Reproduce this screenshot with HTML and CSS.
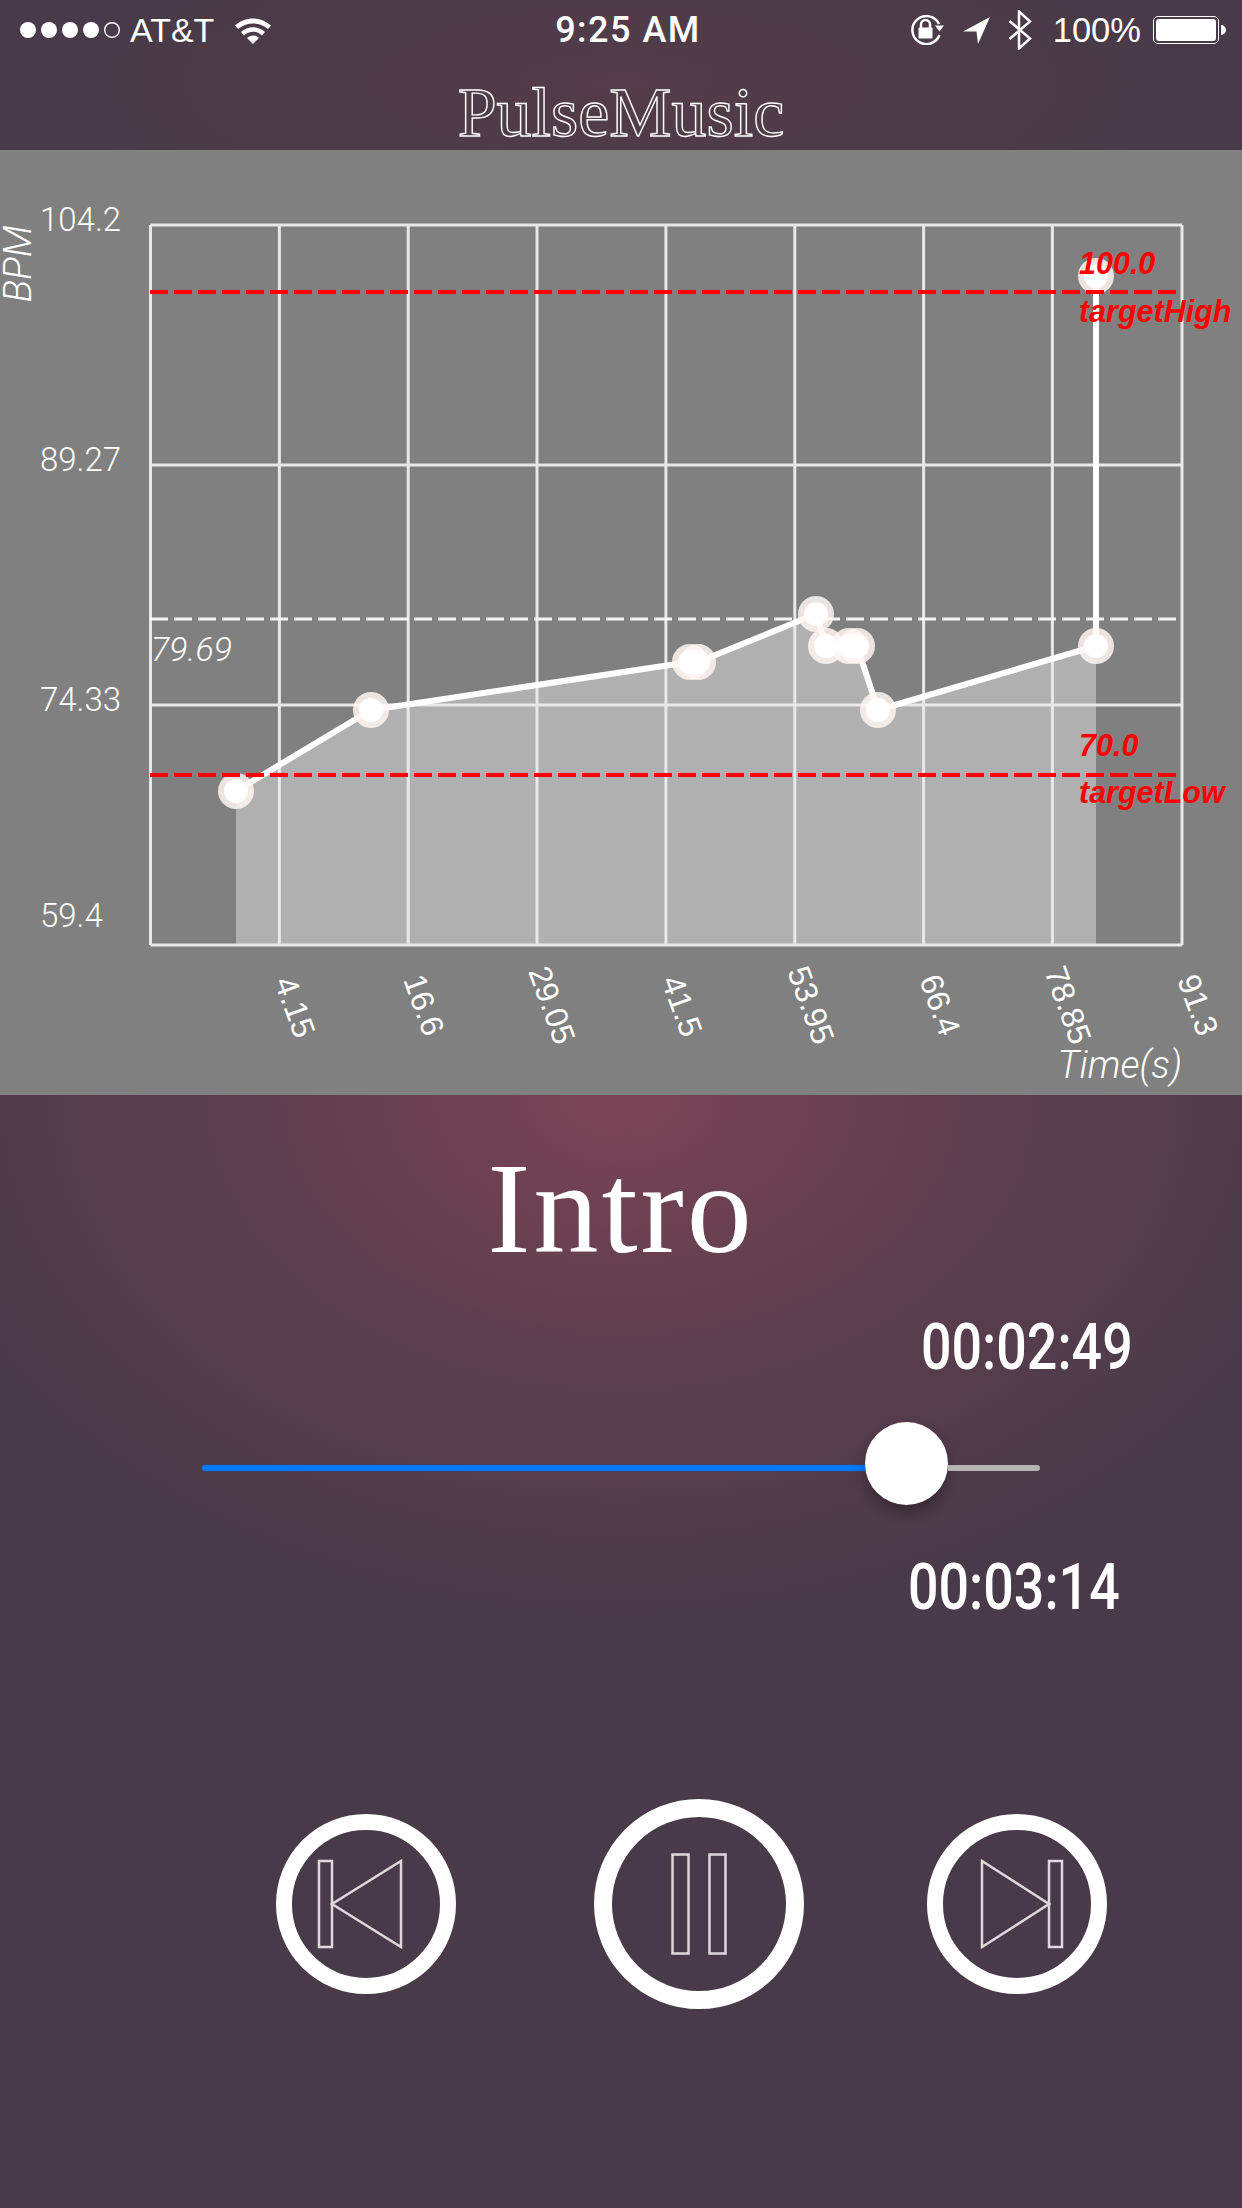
FILE: index.html
```html
<!DOCTYPE html>
<html lang="en">
<head>
    <meta charset="UTF-8">
    <meta name="viewport" content="width=device-width, initial-scale=1.0">
    <title>PulseMusic</title>
    <link rel="stylesheet" href="styles.css">
</head>
<body>
    <header class="top">
        <div class="status">
            <div class="status-left">
                <svg class="signal" width="104" height="20" viewBox="0 0 104 20">
                    <circle cx="8" cy="10" r="8"/>
                    <circle cx="29" cy="10" r="8"/>
                    <circle cx="50" cy="10" r="8"/>
                    <circle cx="71" cy="10" r="8"/>
                    <circle class="empty" cx="92" cy="10" r="7.3"/>
                </svg>
                <span class="carrier">AT&amp;T</span>
                <svg class="wifi" width="38" height="28" viewBox="0 0 38 28">
                    <path d="M1 9.5C11 0 27 0 37 9.5L34 13C25.500 5.500 12.500 5.500 4 13Z"/>
                    <path d="M7 16C13.500 9.500 24.500 9.500 31 16L28 19.500C22.500 14.500 15.500 14.500 10 19.500Z"/>
                    <path d="M13 22C16.500 18.500 21.500 18.500 25 22L19 28Z"/>
                </svg>
            </div>
            <span class="clock">9:25 AM</span>
            <div class="status-right">
                <svg class="lock" width="35" height="30" viewBox="0 0 35 30">
                    <path class="outline" d="M30.500 20A14 14 0 1 1 30 9"/>
                    <path d="M35 10.500H26L30.500 16.500Z"/>
                    <rect x="9.500" y="12.500" width="14" height="11" rx="1"/>
                    <path class="outline" d="M12 13V9.500A4.500 4.500 0 0 1 21 9.500V13"/>
                </svg>
                <svg class="arrow" width="27" height="27" viewBox="0 0 27 27">
                    <path d="M27 0L0 14.500H13.500L15 27Z"/>
                </svg>
                <svg class="bluetooth" width="24" height="40" viewBox="0 0 24 40">
                    <path class="outline" d="M1.500 11L22 28.500L11 38.500V1.500L22 11.500L1.500 29"/>
                </svg>
                <span class="battery-pct">100%</span>
                <div class="battery"><div class="battery-level"></div></div>
                <div class="battery-nub"></div>
            </div>
        </div>
        <h1 class="brand">PulseMusic</h1>
    </header>

    <section class="chart">
        <svg width="1242" height="945" viewBox="0 150 1242 945">
            <polygon class="area" points="236,945 236,791 371,710 690,662 698,662 816,614 826,646 849,646 857,646 878,710 1096,646 1096,945"/>

            <g class="grid">
                <line x1="150.500" y1="225" x2="1182" y2="225"/>
                <line x1="150.500" y1="465" x2="1182" y2="465"/>
                <line x1="150.500" y1="705" x2="1182" y2="705"/>
                <line x1="150.500" y1="945" x2="1182" y2="945"/>
                <line x1="150.500" y1="225" x2="150.500" y2="945"/>
                <line x1="279.400" y1="225" x2="279.400" y2="945"/>
                <line x1="408.200" y1="225" x2="408.200" y2="945"/>
                <line x1="537" y1="225" x2="537" y2="945"/>
                <line x1="665.900" y1="225" x2="665.900" y2="945"/>
                <line x1="794.800" y1="225" x2="794.800" y2="945"/>
                <line x1="923.600" y1="225" x2="923.600" y2="945"/>
                <line x1="1052.400" y1="225" x2="1052.400" y2="945"/>
                <line x1="1182" y1="225" x2="1182" y2="945"/>
            </g>

            <line class="avg-line" x1="150" y1="619" x2="1176" y2="619"/>

            <polyline class="data-line" points="236,791 371,710 690,662 698,662 816,614 826,646 849,646 857,646 878,710 1096,646 1096,276"/>

            <g class="halo">
                <circle cx="236" cy="791" r="18"/>
                <circle cx="371" cy="710" r="18"/>
                <circle cx="690" cy="662" r="18"/>
                <circle cx="698" cy="662" r="18"/>
                <circle cx="816" cy="614" r="18"/>
                <circle cx="826" cy="646" r="18"/>
                <circle cx="849" cy="646" r="18"/>
                <circle cx="857" cy="646" r="18"/>
                <circle cx="878" cy="710" r="18"/>
                <circle cx="1096" cy="646" r="18"/>
                <circle cx="1096" cy="276" r="18"/>
            </g>
            <g class="dot">
                <circle cx="236" cy="791" r="12"/>
                <circle cx="371" cy="710" r="12"/>
                <circle cx="690" cy="662" r="12"/>
                <circle cx="698" cy="662" r="12"/>
                <circle cx="816" cy="614" r="12"/>
                <circle cx="826" cy="646" r="12"/>
                <circle cx="849" cy="646" r="12"/>
                <circle cx="857" cy="646" r="12"/>
                <circle cx="878" cy="710" r="12"/>
                <circle cx="1096" cy="646" r="12"/>
                <circle cx="1096" cy="276" r="12"/>
            </g>

            <line class="target-line" x1="150" y1="292" x2="1176" y2="292"/>
            <line class="target-line" x1="150" y1="775" x2="1176" y2="775"/>

            <text class="target-label" x="1079" y="274">100.0</text>
            <text class="target-label" x="1079" y="322">targetHigh</text>
            <text class="target-label" x="1079" y="756">70.0</text>
            <text class="target-label" x="1079" y="803">targetLow</text>

            <text class="axis-y" x="40" y="231">104.2</text>
            <text class="axis-y" x="40" y="471">89.27</text>
            <text class="axis-y" x="40" y="711">74.33</text>
            <text class="axis-y" x="40" y="927">59.4</text>

            <text class="axis-title" transform="rotate(-90 31 264)" x="31" y="264" text-anchor="middle">BPM</text>
            <text class="axis-title" x="1182" y="1078" text-anchor="end">Time(s)</text>
            <text class="avg-label" x="151" y="661">79.69</text>

            <text class="axis-x" transform="rotate(70 295 1007)" x="295" y="1007">4.15</text>
            <text class="axis-x" transform="rotate(70 424 1005)" x="424" y="1005">16.6</text>
            <text class="axis-x" transform="rotate(70 552 1005)" x="552" y="1005">29.05</text>
            <text class="axis-x" transform="rotate(70 682 1006)" x="682" y="1006">41.5</text>
            <text class="axis-x" transform="rotate(70 811 1005)" x="811" y="1005">53.95</text>
            <text class="axis-x" transform="rotate(70 940 1005)" x="940" y="1005">66.4</text>
            <text class="axis-x" transform="rotate(70 1068 1005)" x="1068" y="1005">78.85</text>
            <text class="axis-x" transform="rotate(70 1198 1005)" x="1198" y="1005">91.3</text>
        </svg>
    </section>

    <main class="player">
        <h2 class="track">Intro</h2>
        <div class="time time-now">00:02:49</div>
        <div class="slider">
            <div class="slider-fill"></div>
            <div class="slider-thumb"></div>
            <div class="slider-rest"></div>
        </div>
        <div class="time time-total">00:03:14</div>

        <div class="controls">
            <button class="ctrl ctrl-prev">
                <svg width="90" height="92" viewBox="0 0 90 92">
                    <rect x="3" y="3" width="13" height="86"/>
                    <path d="M85 3V89L16 46Z"/>
                </svg>
            </button>
            <button class="ctrl ctrl-main">
                <svg width="58" height="104" viewBox="0 0 58 104">
                    <rect x="2.500" y="2.500" width="16" height="99"/>
                    <rect x="39.500" y="2.500" width="16" height="99"/>
                </svg>
            </button>
            <button class="ctrl ctrl-next">
                <svg width="90" height="92" viewBox="0 0 90 92">
                    <path d="M5 3V89L72 46Z"/>
                    <rect x="72" y="3" width="13" height="86"/>
                </svg>
            </button>
        </div>
    </main>
</body>
</html>
```

FILE: styles.css
```css
* {
    box-sizing: border-box;
}
html, body {
    margin: 0;
    padding: 0;
}
body {
    width: 1242px;
    height: 2208px;
    overflow: hidden;
    background: #483a48;
    color: white;
    font-family: "Liberation Sans", Arial, sans-serif;
}

/* top bar */
.top {
    height: 150px;
    background: radial-gradient(ellipse 560px 170px at 50% 55%, #543c4a, #483a48);
}
.status {
    height: 60px;
    display: grid;
    grid-template-columns: 1fr auto 1fr;
    align-items: center;
    padding: 0 16px 0 20px;
    font-size: 34px;
}
.status svg {
    fill: white;
    flex: none;
}
.status .outline {
    fill: none;
    stroke: white;
    stroke-width: 2.500;
}
.status-left {
    display: flex;
    align-items: center;
}
.signal .empty {
    fill: none;
    stroke: white;
    stroke-width: 1.400;
}
.carrier {
    margin-left: 6px;
}
.wifi {
    margin-left: 20px;
}
.clock {
    font-family: Roboto, sans-serif;
    font-weight: 500;
    font-size: 36px;
    letter-spacing: 1.500px;
    margin-left: 10px;
}
.status-right {
    display: flex;
    align-items: center;
    justify-content: flex-end;
}
.arrow {
    margin-left: 19px;
}
.bluetooth {
    margin-left: 18px;
}
.battery-pct {
    margin-left: 21px;
    font-size: 34.500px;
}
.battery {
    width: 66px;
    height: 28px;
    margin-left: 12px;
    padding: 2px;
    border: 1.500px solid white;
    border-radius: 5px;
}
.battery-level {
    height: 100%;
    background: white;
    border-radius: 3px;
}
.battery-nub {
    width: 5px;
    height: 10px;
    margin-left: 2px;
    background: white;
    border-radius: 0 5px 5px 0;
}
.brand {
    margin: 18px 0 0;
    text-align: center;
    font-family: "Liberation Serif", "Times New Roman", serif;
    font-size: 70px;
    line-height: 70px;
    font-weight: normal;
    color: transparent;
    -webkit-text-stroke: 1.400px white;
}

/* chart */
.chart {
    height: 945px;
    background: #808080;
}
.chart svg {
    display: block;
}
.area {
    fill: #b0b0b0;
}
.grid line {
    stroke: #e8e8e8;
    stroke-width: 3;
}
.avg-line {
    stroke: #f4f4f4;
    stroke-width: 3;
    stroke-dasharray: 18 6;
}
.target-line {
    stroke: #ff0000;
    stroke-width: 4;
    stroke-dasharray: 18 6;
}
.data-line {
    fill: none;
    stroke: white;
    stroke-width: 6;
    stroke-linejoin: round;
}
.halo circle {
    fill: #fff6f2;
    fill-opacity: 0.85;
}
.dot circle {
    fill: white;
}
.target-label {
    fill: #ff0000;
    font-size: 30.500px;
    font-weight: bold;
    font-style: italic;
}
.axis-y {
    fill: white;
    font-family: Roboto, sans-serif;
    font-weight: 300;
    font-size: 33px;
}
.axis-title {
    fill: white;
    font-family: Roboto, sans-serif;
    font-weight: 300;
    font-style: italic;
    font-size: 38px;
}
.avg-label {
    fill: white;
    font-family: Roboto, sans-serif;
    font-weight: 300;
    font-style: italic;
    font-size: 34px;
}
.axis-x {
    fill: white;
    font-size: 32px;
    text-anchor: middle;
    dominant-baseline: central;
}

/* player */
.player {
    height: 1113px;
    padding-top: 48px;
    background: radial-gradient(ellipse 760px 540px at 50% 0, #7b4456, #5f3f4f 45%, #483a48);
}
.track {
    margin: 0;
    text-align: center;
    font-family: "Liberation Serif", "Times New Roman", serif;
    font-size: 130px;
    line-height: 130px;
    letter-spacing: 3px;
    font-weight: normal;
}
.time {
    font-family: Roboto, sans-serif;
    font-weight: 500;
    font-size: 64px;
    line-height: 70px;
    transform: scaleX(0.84);
    transform-origin: left center;
}
.time-now {
    margin: 40px 0 0 921px;
}
.time-total {
    margin: 48px 0 0 908px;
}
.slider {
    display: flex;
    align-items: center;
    width: 838px;
    height: 83px;
    margin: 39px 0 0 202px;
}
.slider-fill {
    width: 663px;
    height: 6px;
    margin-top: 8px;
    background: #007aff;
    border-radius: 3px 0 0 3px;
}
.slider-thumb {
    flex: none;
    width: 83px;
    height: 83px;
    background: white;
    border-radius: 50%;
    box-shadow: 0 8px 14px rgba(0,0,0,0.3);
}
.slider-rest {
    flex: 1;
    height: 6px;
    margin-top: 8px;
    background: #b5b5b5;
    border-radius: 0 3px 3px 0;
}
.controls {
    display: flex;
    align-items: center;
    margin: 176px 0 0 276px;
}
.ctrl {
    width: 180px;
    height: 180px;
    padding: 0;
    display: flex;
    align-items: center;
    justify-content: center;
    background: none;
    border: 16px solid white;
    border-radius: 50%;
}
.ctrl-main {
    width: 210px;
    height: 210px;
    border-width: 18px;
    margin: 0 123px 0 138px;
}
.ctrl svg {
    display: block;
    flex: none;
    fill: none;
    stroke: #dfd9dd;
    stroke-width: 2.500;
}
.ctrl-prev svg {
    margin-right: 10px;
}
.ctrl-next svg {
    margin-left: 10px;
}
```
